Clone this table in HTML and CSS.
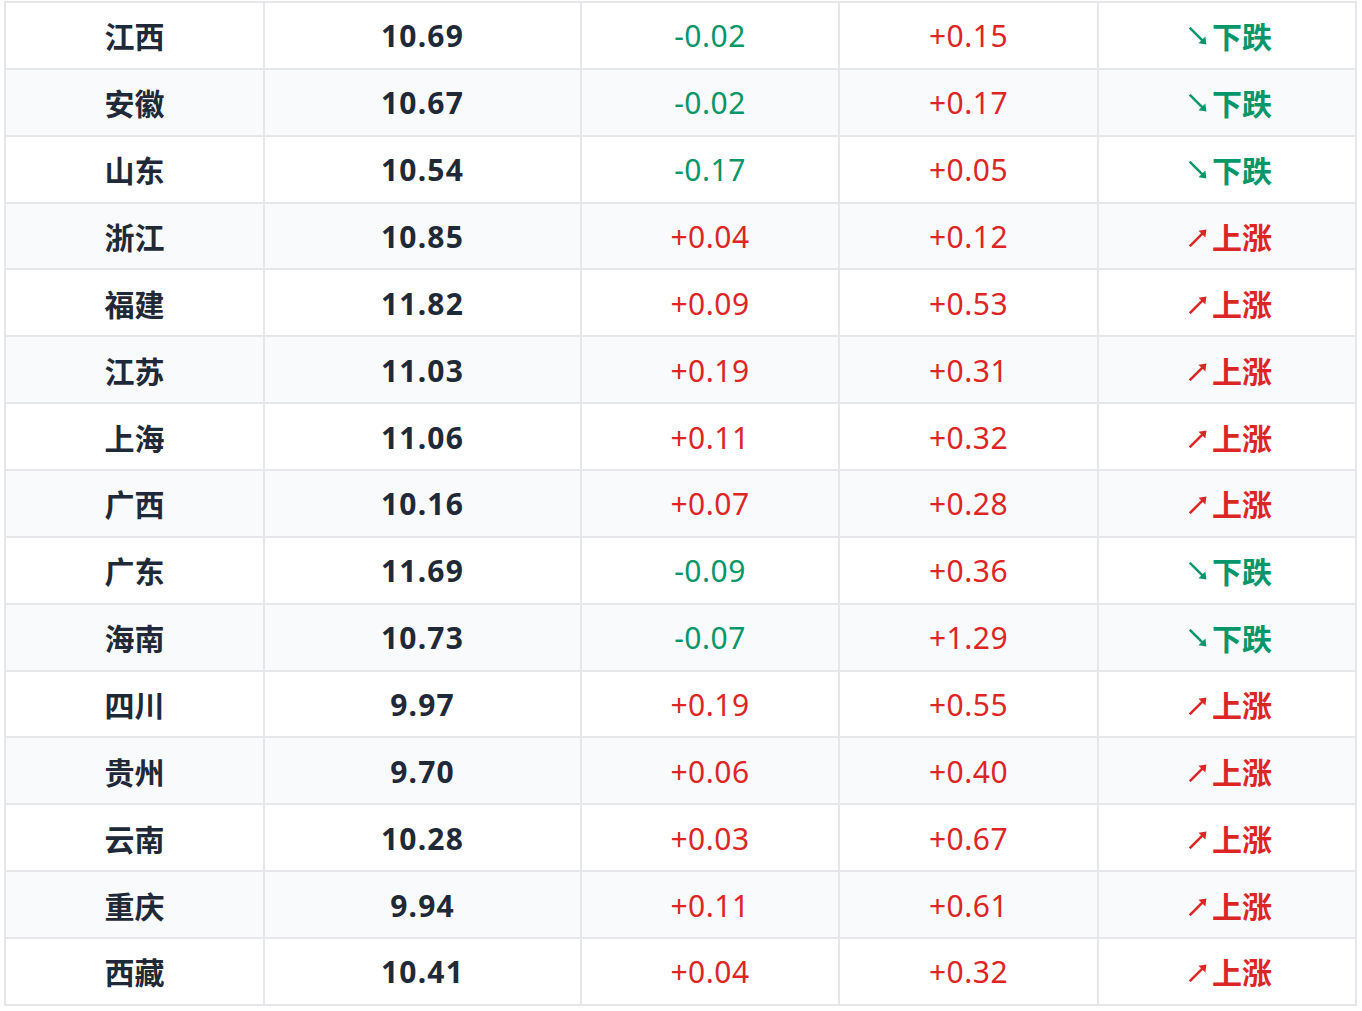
FILE: index.html
```html
<!DOCTYPE html>
<html lang="zh">
<head>
<meta charset="utf-8">
<title>油价</title>
<link rel="stylesheet" href="styles.css">
</head>
<body>
<div class="table">
  <div class="row"><div class="cell name">江西</div><div class="cell price">10.69</div><div class="cell down">-0.02</div><div class="cell up">+0.15</div><div class="cell trend down"><svg class="arrow" viewBox="0 0 18 18"><line x1="1.5" y1="1.5" x2="13" y2="13"/><polygon points="16.5,16.5 9,15.5 15.5,9"/></svg>下跌</div></div>
  <div class="row"><div class="cell name">安徽</div><div class="cell price">10.67</div><div class="cell down">-0.02</div><div class="cell up">+0.17</div><div class="cell trend down"><svg class="arrow" viewBox="0 0 18 18"><line x1="1.5" y1="1.5" x2="13" y2="13"/><polygon points="16.5,16.5 9,15.5 15.5,9"/></svg>下跌</div></div>
  <div class="row"><div class="cell name">山东</div><div class="cell price">10.54</div><div class="cell down">-0.17</div><div class="cell up">+0.05</div><div class="cell trend down"><svg class="arrow" viewBox="0 0 18 18"><line x1="1.5" y1="1.5" x2="13" y2="13"/><polygon points="16.5,16.5 9,15.5 15.5,9"/></svg>下跌</div></div>
  <div class="row"><div class="cell name">浙江</div><div class="cell price">10.85</div><div class="cell up">+0.04</div><div class="cell up">+0.12</div><div class="cell trend up"><svg class="arrow" viewBox="0 0 18 18"><line x1="1.5" y1="16.5" x2="13" y2="5"/><polygon points="16.5,1.5 15.5,9 9,2.5"/></svg>上涨</div></div>
  <div class="row"><div class="cell name">福建</div><div class="cell price">11.82</div><div class="cell up">+0.09</div><div class="cell up">+0.53</div><div class="cell trend up"><svg class="arrow" viewBox="0 0 18 18"><line x1="1.5" y1="16.5" x2="13" y2="5"/><polygon points="16.5,1.5 15.5,9 9,2.5"/></svg>上涨</div></div>
  <div class="row"><div class="cell name">江苏</div><div class="cell price">11.03</div><div class="cell up">+0.19</div><div class="cell up">+0.31</div><div class="cell trend up"><svg class="arrow" viewBox="0 0 18 18"><line x1="1.5" y1="16.5" x2="13" y2="5"/><polygon points="16.5,1.5 15.5,9 9,2.5"/></svg>上涨</div></div>
  <div class="row"><div class="cell name">上海</div><div class="cell price">11.06</div><div class="cell up">+0.11</div><div class="cell up">+0.32</div><div class="cell trend up"><svg class="arrow" viewBox="0 0 18 18"><line x1="1.5" y1="16.5" x2="13" y2="5"/><polygon points="16.5,1.5 15.5,9 9,2.5"/></svg>上涨</div></div>
  <div class="row"><div class="cell name">广西</div><div class="cell price">10.16</div><div class="cell up">+0.07</div><div class="cell up">+0.28</div><div class="cell trend up"><svg class="arrow" viewBox="0 0 18 18"><line x1="1.5" y1="16.5" x2="13" y2="5"/><polygon points="16.5,1.5 15.5,9 9,2.5"/></svg>上涨</div></div>
  <div class="row"><div class="cell name">广东</div><div class="cell price">11.69</div><div class="cell down">-0.09</div><div class="cell up">+0.36</div><div class="cell trend down"><svg class="arrow" viewBox="0 0 18 18"><line x1="1.5" y1="1.5" x2="13" y2="13"/><polygon points="16.5,16.5 9,15.5 15.5,9"/></svg>下跌</div></div>
  <div class="row"><div class="cell name">海南</div><div class="cell price">10.73</div><div class="cell down">-0.07</div><div class="cell up">+1.29</div><div class="cell trend down"><svg class="arrow" viewBox="0 0 18 18"><line x1="1.5" y1="1.5" x2="13" y2="13"/><polygon points="16.5,16.5 9,15.5 15.5,9"/></svg>下跌</div></div>
  <div class="row"><div class="cell name">四川</div><div class="cell price">9.97</div><div class="cell up">+0.19</div><div class="cell up">+0.55</div><div class="cell trend up"><svg class="arrow" viewBox="0 0 18 18"><line x1="1.5" y1="16.5" x2="13" y2="5"/><polygon points="16.5,1.5 15.5,9 9,2.5"/></svg>上涨</div></div>
  <div class="row"><div class="cell name">贵州</div><div class="cell price">9.70</div><div class="cell up">+0.06</div><div class="cell up">+0.40</div><div class="cell trend up"><svg class="arrow" viewBox="0 0 18 18"><line x1="1.5" y1="16.5" x2="13" y2="5"/><polygon points="16.5,1.5 15.5,9 9,2.5"/></svg>上涨</div></div>
  <div class="row"><div class="cell name">云南</div><div class="cell price">10.28</div><div class="cell up">+0.03</div><div class="cell up">+0.67</div><div class="cell trend up"><svg class="arrow" viewBox="0 0 18 18"><line x1="1.5" y1="16.5" x2="13" y2="5"/><polygon points="16.5,1.5 15.5,9 9,2.5"/></svg>上涨</div></div>
  <div class="row"><div class="cell name">重庆</div><div class="cell price">9.94</div><div class="cell up">+0.11</div><div class="cell up">+0.61</div><div class="cell trend up"><svg class="arrow" viewBox="0 0 18 18"><line x1="1.5" y1="16.5" x2="13" y2="5"/><polygon points="16.5,1.5 15.5,9 9,2.5"/></svg>上涨</div></div>
  <div class="row"><div class="cell name">西藏</div><div class="cell price">10.41</div><div class="cell up">+0.04</div><div class="cell up">+0.32</div><div class="cell trend up"><svg class="arrow" viewBox="0 0 18 18"><line x1="1.5" y1="16.5" x2="13" y2="5"/><polygon points="16.5,1.5 15.5,9 9,2.5"/></svg>上涨</div></div>
</div>
</body>
</html>
```
FILE: styles.css
```css
html, body {
  margin: 0;
  padding: 0;
  background: #ffffff;
}
body {
  font-family: "Noto Sans", "Noto Sans CJK SC", sans-serif;
  font-size: 30px;
  color: #1f2937;
}
.table {
  margin: 1px 0 0 4px;
  width: 1353px;
  border-top: 2px solid #e5e7eb;
  border-left: 2px solid #e5e7eb;
  box-sizing: border-box;
}
.row {
  display: grid;
  grid-template-columns: 259px 317px 258px 259px 258px;
  height: 66.87px;
  box-sizing: border-box;
  border-bottom: 2px solid #e5e7eb;
}
.row:nth-child(even) {
  background: #f9fafb;
}
.cell {
  display: flex;
  align-items: center;
  justify-content: center;
  border-right: 2px solid #e5e7eb;
  line-height: 1;
  padding-top: 2px;
  letter-spacing: 0.5px;
}
.name {
  font-weight: 700;
  font-family: "Noto Sans CJK SC", sans-serif;
  padding-top: 0;
  letter-spacing: 0;
}
.price {
  font-weight: 700;
  letter-spacing: 1.2px;
}
.down {
  color: #059669;
}
.up {
  color: #dc2626;
}
.trend {
  font-weight: 700;
  font-family: "Noto Sans CJK SC", sans-serif;
  gap: 4px;
  padding-top: 0;
  padding-left: 7px;
  letter-spacing: 0;
}
.arrow {
  width: 19px;
  height: 19px;
  flex: none;
  margin-top: 3px;
}
.arrow line {
  stroke: currentColor;
  stroke-width: 2.4;
  stroke-linecap: square;
}
.arrow polygon {
  fill: currentColor;
}
```
